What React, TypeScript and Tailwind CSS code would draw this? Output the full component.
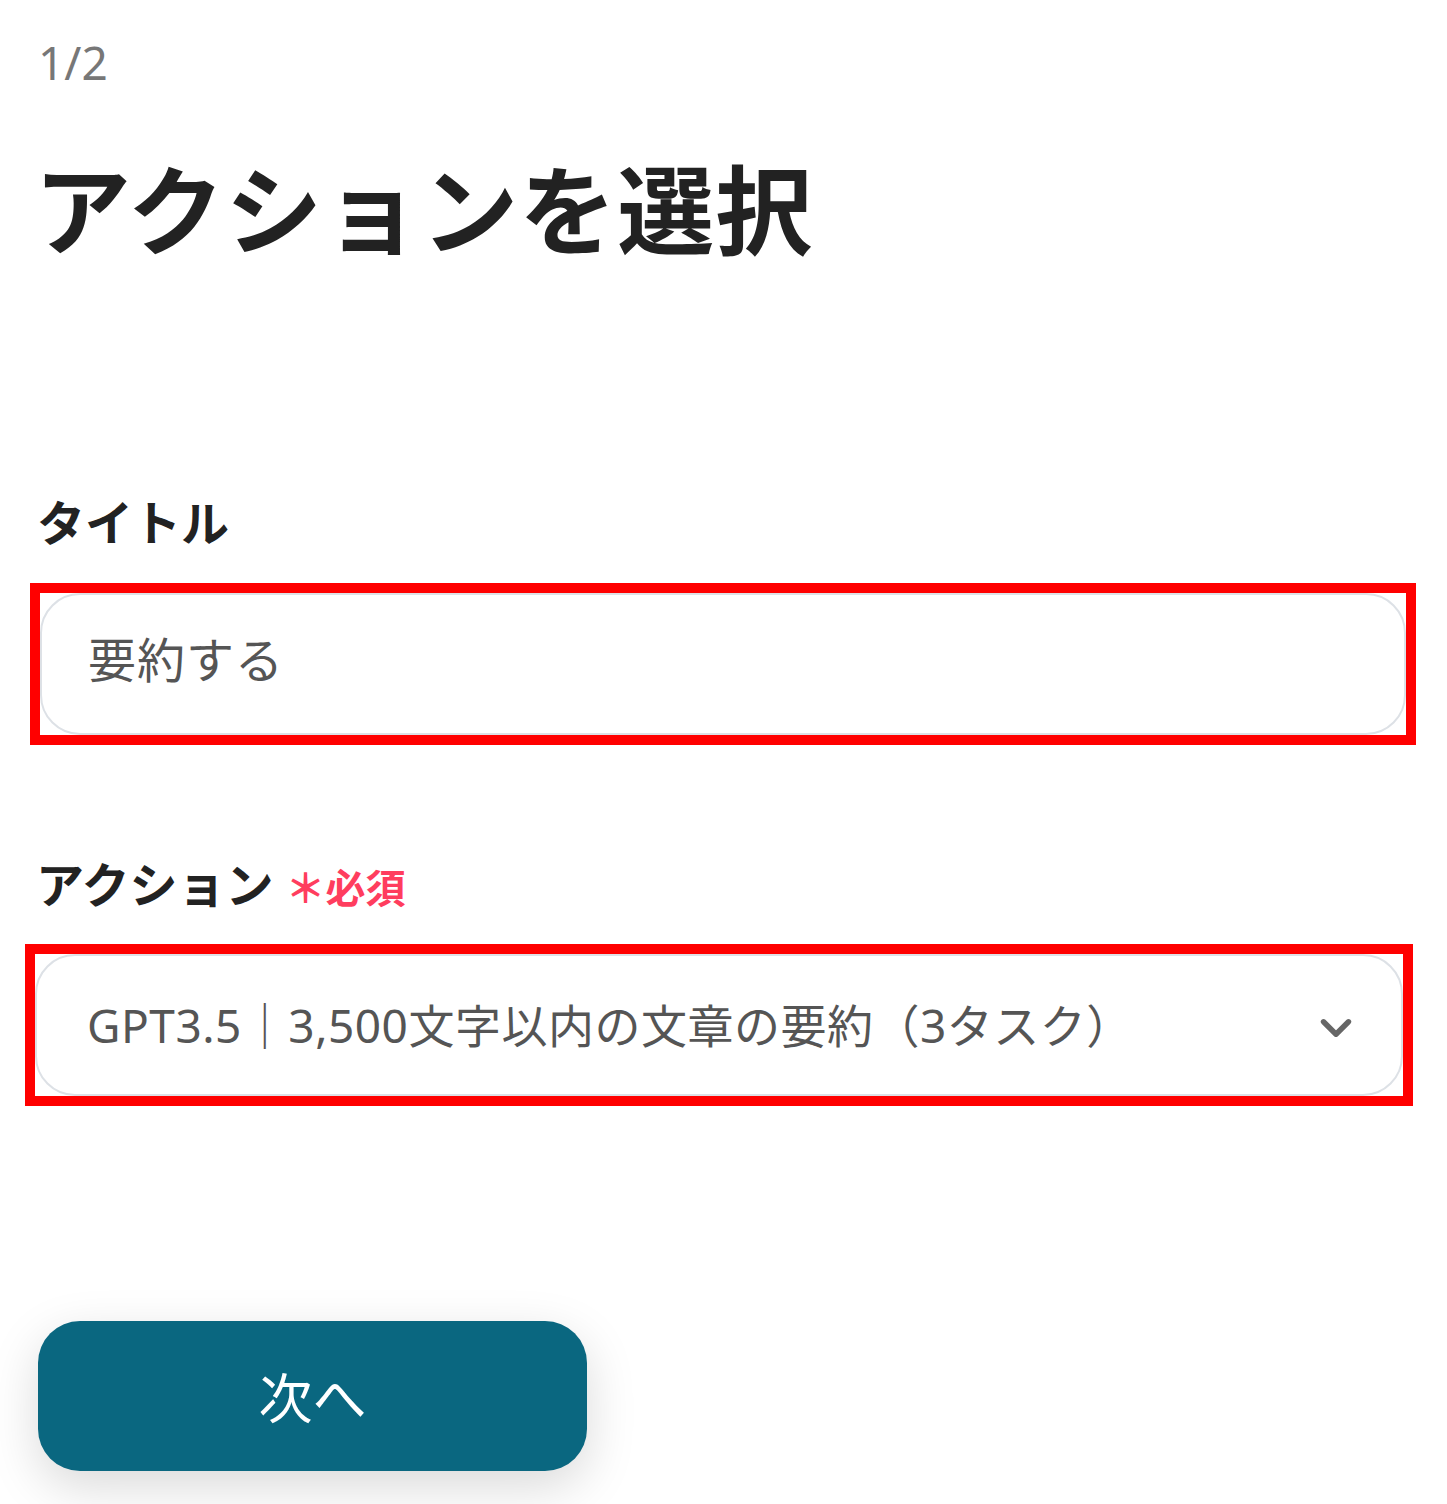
import { ChevronDown } from "lucide-react";

const jp = "font-['Noto_Sans_CJK_JP','Noto_Sans',sans-serif]";
const mixed = "font-['Noto_Sans','Noto_Sans_CJK_JP',sans-serif]";

export default function App() {
  return (
    <div className={`min-h-[1504px] w-[1447px] bg-white pt-[39px] ${mixed}`}>
      <div className="pl-[40px]">
        <p className="-ml-[2px] text-[46px] leading-none text-[#777]">1/2</p>

        <h1 className={`-ml-[6px] mt-[71px] text-[97px] font-bold leading-none tracking-[1px] text-[#222] ${jp}`}>
          アクションを選択
        </h1>

        <label className={`-ml-[3px] mt-[243px] block text-[48px] font-bold leading-none text-[#222] ${jp}`}>
          タイトル
        </label>
      </div>

      <div className="ml-[30px] mt-[39px] w-[1386px] border-[10px] border-[#ff0000]">
        <div className="flex h-[142px] items-center rounded-[40px] border-2 border-[#dde1e6] pb-[14px] pl-[46px]">
          <span className={`text-[48px] leading-none tracking-[1px] text-[#555] ${jp}`}>要約する</span>
        </div>
      </div>

      <div className="mt-[113px] flex items-baseline pl-[36px]">
        <span className={`text-[48px] font-bold leading-none text-[#222] ${jp}`}>アクション</span>
        <span className={`ml-[12px] text-[40px] font-bold leading-none text-[#ff3d5e] ${jp}`}>
          ＊必須
        </span>
      </div>

      <div className="ml-[25px] mt-[38px] w-[1388px] border-[10px] border-[#ff0000]">
        <div className="flex h-[142px] items-center justify-between rounded-[40px] border-2 border-[#dde1e6] pl-[50px] pr-[40px]">
          <span className="text-[46px] leading-none tracking-[0.5px] text-[#555]">
            GPT3.5｜3,500文字以内の文章の要約（3タスク）
          </span>
          <ChevronDown className="mt-[6px] h-[50px] w-[50px] text-[#666]" strokeWidth={2.6} />
        </div>
      </div>

      <div className="pl-[38px] pt-[215px]">
        <button className="flex h-[150px] w-[549px] items-center justify-center rounded-[42px] bg-[#0a6780] shadow-[0_16px_50px_rgba(0,0,0,0.15)]">
          <span className={`text-[54px] leading-none text-white ${jp}`}>次へ</span>
        </button>
      </div>
    </div>
  );
}
